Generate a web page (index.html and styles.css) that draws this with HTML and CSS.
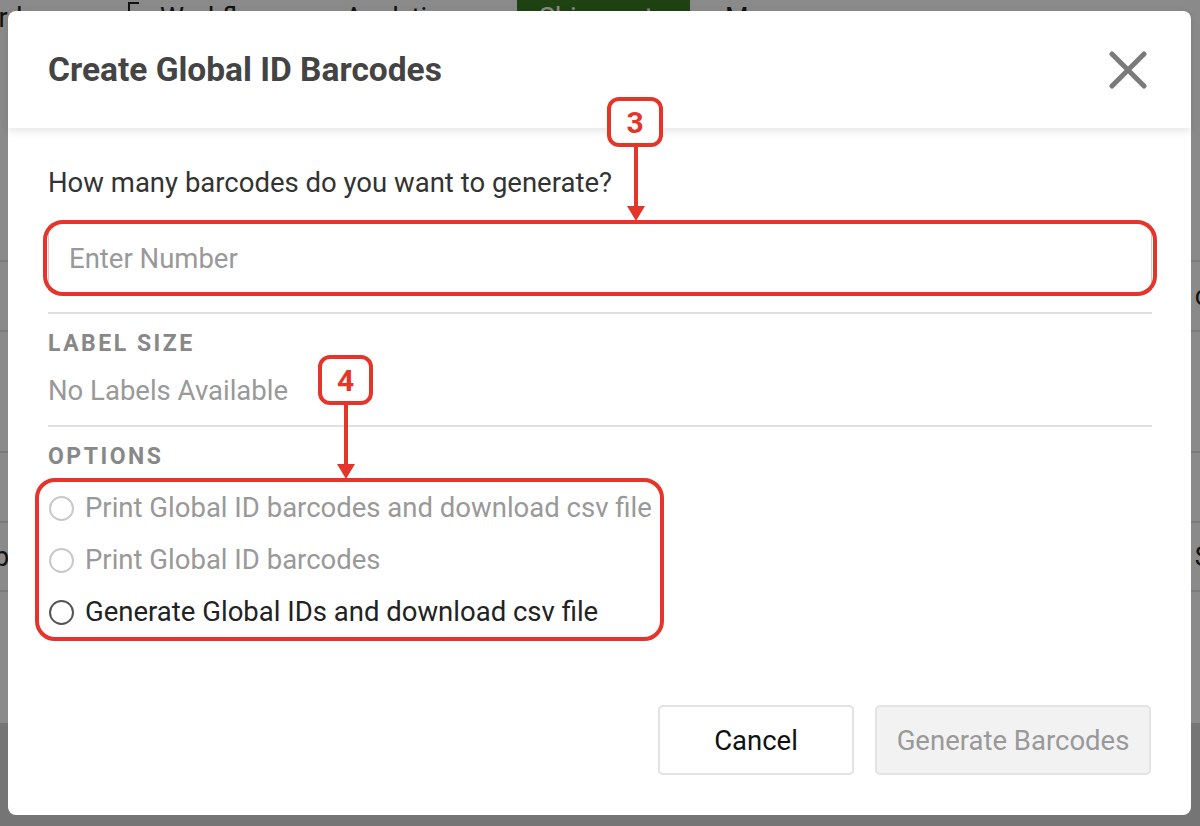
FILE: index.html
```html
<!DOCTYPE html>
<html lang="en">
<head>
    <meta charset="UTF-8">
    <meta name="viewport" content="width=device-width, initial-scale=1.0">
    <title>Create Global ID Barcodes</title>
    <link rel="stylesheet" href="styles.css">
</head>
<body>
    <!-- page behind the modal -->
    <div class="page">
        <nav class="topnav">
            <span class="nav-item nav-first">Dashboard</span>
            <span class="nav-item nav-icon">
                <svg width="14" height="16" viewBox="0 0 14 16"><path d="M1 15V1h10" fill="none" stroke="#222" stroke-width="2"/></svg>
                Workflows
            </span>
            <span class="nav-item">Analytics</span>
            <span class="nav-item nav-active">Shipments</span>
            <span class="nav-item">More</span>
        </nav>
        <div class="rows">
            <div class="row row-a"></div>
            <div class="row row-b"><span></span><span class="edge-right">carrier</span></div>
            <div class="row row-c"></div>
            <div class="row row-d"></div>
            <div class="row row-e"><span class="edge-left">b</span><span class="edge-right">Status</span></div>
            <div class="row row-f"></div>
        </div>
    </div>

    <div class="overlay">
        <div class="modal">
            <div class="modal-header">
                <h2>Create Global ID Barcodes</h2>
                <button class="close-btn" aria-label="Close">
                    <svg width="38" height="38" viewBox="0 0 38 38">
                        <path d="M3 3L35 35M35 3L3 35" stroke="#7a7a7a" stroke-width="5" stroke-linecap="round"/>
                    </svg>
                </button>
            </div>

            <div class="modal-body">
                <p class="question">How many barcodes do you want to generate?</p>
                <input type="text" class="count-input" placeholder="Enter Number">

                <hr class="divider">

                <div class="section-title">LABEL SIZE</div>
                <p class="muted">No Labels Available</p>

                <hr class="divider">

                <div class="section-title">OPTIONS</div>
                <div class="options">
                    <label class="option disabled">
                        <input type="radio" name="mode" disabled>
                        Print Global ID barcodes and download csv file
                    </label>
                    <label class="option disabled">
                        <input type="radio" name="mode" disabled>
                        Print Global ID barcodes
                    </label>
                    <label class="option">
                        <input type="radio" name="mode">
                        Generate Global IDs and download csv file
                    </label>
                </div>
            </div>

            <div class="modal-footer">
                <button class="btn btn-cancel">Cancel</button>
                <button class="btn btn-generate" disabled>Generate Barcodes</button>
            </div>
        </div>
    </div>

    <!-- screenshot annotations -->
    <div class="notes">
        <div class="note-box note-box-3"></div>
        <div class="badge badge-3">3</div>
        <div class="arrow arrow-3"></div>

        <div class="note-box note-box-4"></div>
        <div class="badge badge-4">4</div>
        <div class="arrow arrow-4"></div>
    </div>
</body>
</html>
```

FILE: styles.css
```css
* {
    margin: 0;
    padding: 0;
    box-sizing: border-box;
}

body {
    width: 1200px;
    height: 826px;
    overflow: hidden;
    position: relative;
    font-family: Roboto, 'Liberation Sans', sans-serif;
    background: #d8d8d8;
}

/* background page */
.page {
    width: 1200px;
}

.topnav {
    height: 68px;
    background: #fff;
    display: flex;
    align-items: flex-start;
    font-size: 27px;
    color: #222;
}

.nav-item {
    padding-top: 2px;
    white-space: nowrap;
}

.nav-first {
    margin-left: -108px;
    width: 236px;
}

.nav-icon {
    display: flex;
    align-items: flex-start;
    gap: 18px;
    width: 217px;
}

.topnav .nav-item:nth-child(3) {
    width: 172px;
}

.nav-active {
    background: #3a7a22;
    color: #fff;
    width: 173px;
    height: 40px;
    padding-left: 22px;
}

.topnav .nav-item:last-child {
    margin-left: 35px;
}

.rows {
    background: #fff;
}

.row {
    display: flex;
    justify-content: space-between;
    align-items: center;
    border-bottom: 2px solid #e4e4e4;
    font-size: 27px;
    color: #222;
    white-space: nowrap;
    overflow: hidden;
}

.row-a { height: 194px; }
.row-b { height: 70px; }
.row-c { height: 121px; }
.row-d { height: 70px; }
.row-e { height: 69px; }
.row-f { height: 131px; border-bottom: none; }

.edge-left {
    margin-left: -6px;
}

.edge-right {
    margin-right: -72px;
}

/* modal */
.overlay {
    position: absolute;
    inset: 0;
    background: rgba(0, 0, 0, 0.46);
    padding: 11px 9px 11px 8px;
}

.modal {
    width: 1183px;
    height: 804px;
    background: #fff;
    border-radius: 8px;
    display: flex;
    flex-direction: column;
}

.modal-header {
    height: 117px;
    display: flex;
    align-items: center;
    justify-content: space-between;
    padding: 0 44px 0 40px;
    border-radius: 8px 8px 0 0;
    box-shadow: 0 3px 8px rgba(0, 0, 0, 0.1);
}

.modal-header h2 {
    font-size: 33.5px;
    font-weight: 700;
    color: #444;
}

.close-btn {
    background: none;
    border: none;
    display: flex;
    cursor: pointer;
}

.modal-body {
    padding: 41px 39px 0 40px;
    flex: 1;
}

.question {
    font-size: 27.5px;
    line-height: 28px;
    color: #333;
}

.count-input {
    display: block;
    width: 100%;
    height: 70px;
    margin-top: 26px;
    padding: 0 20px;
    border: 1px solid #ccc;
    border-radius: 4px;
    font-family: inherit;
    font-size: 27.5px;
    outline: none;
}

.count-input::placeholder {
    color: #999;
}

.divider {
    border: none;
    border-top: 2px solid #e0e0e0;
    margin: 19px 0 18px;
}

.section-title {
    font-size: 23px;
    line-height: 24px;
    font-weight: 700;
    letter-spacing: 2.5px;
    color: #888;
}

.muted {
    font-size: 27.5px;
    line-height: 28px;
    color: #999;
    margin-top: 21px;
}

.muted + .divider {
    margin-top: 20px;
}

.options {
    display: flex;
    flex-direction: column;
    gap: 24px;
    margin-top: 25px;
}

.option {
    display: flex;
    align-items: center;
    gap: 11px;
    font-size: 27.5px;
    line-height: 28px;
    color: #222;
}

.option input {
    appearance: none;
    width: 25px;
    height: 25px;
    margin-left: 1px;
    border: 2px solid #555;
    border-radius: 50%;
    background: #fff;
}

.option.disabled {
    color: #999;
}

.option.disabled input {
    border-color: #c8c8c8;
}

.modal-footer {
    display: flex;
    justify-content: flex-end;
    gap: 21px;
    padding: 0 40px 40px 0;
}

.btn {
    height: 70px;
    border-radius: 5px;
    font-family: inherit;
    font-size: 27.5px;
}

.btn-cancel {
    width: 196px;
    background: #fff;
    border: 2px solid #e2e2e2;
    color: #111;
}

.btn-generate {
    width: 276px;
    background: #f2f2f2;
    border: 2px solid #e4e4e4;
    color: #999;
}

/* annotations */
.notes {
    position: absolute;
    inset: 0;
    pointer-events: none;
}

.note-box {
    position: absolute;
    border: 4px solid #e5352a;
    border-radius: 20px;
}

.note-box-3 {
    left: 43px;
    top: 220px;
    width: 1114px;
    height: 76px;
}

.note-box-4 {
    left: 35px;
    top: 478px;
    width: 629px;
    height: 163px;
}

.badge {
    position: absolute;
    width: 56px;
    height: 50px;
    border: 4px solid #e5352a;
    border-radius: 12px;
    background: #fff;
    color: #e5352a;
    font-size: 30px;
    font-weight: 700;
    display: flex;
    align-items: center;
    justify-content: center;
}

.badge-3 {
    left: 607px;
    top: 97px;
}

.badge-4 {
    left: 318px;
    top: 355px;
    width: 55px;
}

.arrow {
    position: absolute;
    width: 4px;
    background: #e5352a;
}

.arrow::after {
    content: '';
    position: absolute;
    left: -7px;
    bottom: -14px;
    border-left: 9px solid transparent;
    border-right: 9px solid transparent;
    border-top: 15px solid #e5352a;
}

.arrow-3 {
    left: 634px;
    top: 146px;
    height: 61px;
}

.arrow-4 {
    left: 344px;
    top: 404px;
    height: 61px;
}
```
